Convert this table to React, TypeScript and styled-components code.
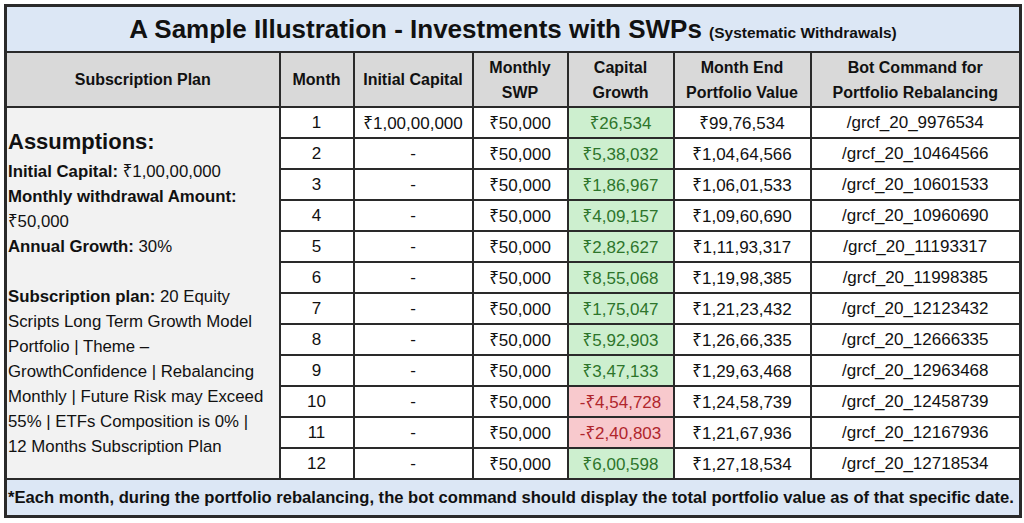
import React from "react";
import styled, { createGlobalStyle } from "styled-components";

// Types
type Row = {
  month: number;
  initial: string;
  swp: string;
  growth: string;
  end: string;
  command: string;
};

const GlobalStyle = createGlobalStyle`
  html, body {
    margin: 0;
    padding: 0;
    background: #ffffff;
  }
  body {
    font-family: "Liberation Sans", "Noto Sans", sans-serif;
    color: #111111;
  }
`;

const Page = styled.div`
  padding: 4px 4px 0 4px;
`;

const Table = styled.table`
  width: 1015px;
  border-collapse: collapse;
  table-layout: fixed;
  border: 3px solid #2a2a2a;
`;

const TitleCell = styled.td`
  height: 44px;
  background: #dce7f5;
  text-align: center;
  font-weight: 700;
  font-size: 26px;
  border: 2px solid #2a2a2a;
  padding: 0;
  white-space: nowrap;
`;

const TitleNote = styled.span`
  font-size: 15.5px;
`;

const HeadCell = styled.th`
  height: 53px;
  background: #d9d9d9;
  font-size: 16px;
  font-weight: 700;
  line-height: 25px;
  text-align: center;
  border: 2px solid #2a2a2a;
  padding: 0;
`;

const PlanCell = styled.td`
  background: #f2f2f2;
  border: 2px solid #2a2a2a;
  padding: 0 2px 0 1px;
  vertical-align: middle;
  font-size: 16.8px;
  line-height: 25px;
  white-space: nowrap;
`;

const PlanHeading = styled.div`
  font-size: 22px;
  font-weight: 700;
  line-height: 30px;
  margin-bottom: 2px;
`;

const Gap = styled.div`
  height: 25px;
`;

const Cell = styled.td<{ $tone?: "up" | "down" }>`
  height: 29px;
  padding: 0;
  text-align: center;
  font-size: 17px;
  border: 2px solid #2a2a2a;
  white-space: nowrap;
  background: ${({ $tone }) =>
    $tone === "up" ? "#cdefcf" : $tone === "down" ? "#f8c9cd" : "#ffffff"};
  color: ${({ $tone }) =>
    $tone === "up" ? "#2d752b" : $tone === "down" ? "#b0262c" : "#111111"};
`;

const FootCell = styled.td`
  height: 35px;
  background: #dce7f5;
  font-weight: 700;
  font-size: 16.6px;
  padding: 0 2px 0 1px;
  border: 2px solid #2a2a2a;
  white-space: nowrap;
`;

const rows: Row[] = [
  { month: 1, initial: "₹1,00,00,000", swp: "₹50,000", growth: "₹26,534", end: "₹99,76,534", command: "/grcf_20_9976534" },
  { month: 2, initial: "-", swp: "₹50,000", growth: "₹5,38,032", end: "₹1,04,64,566", command: "/grcf_20_10464566" },
  { month: 3, initial: "-", swp: "₹50,000", growth: "₹1,86,967", end: "₹1,06,01,533", command: "/grcf_20_10601533" },
  { month: 4, initial: "-", swp: "₹50,000", growth: "₹4,09,157", end: "₹1,09,60,690", command: "/grcf_20_10960690" },
  { month: 5, initial: "-", swp: "₹50,000", growth: "₹2,82,627", end: "₹1,11,93,317", command: "/grcf_20_11193317" },
  { month: 6, initial: "-", swp: "₹50,000", growth: "₹8,55,068", end: "₹1,19,98,385", command: "/grcf_20_11998385" },
  { month: 7, initial: "-", swp: "₹50,000", growth: "₹1,75,047", end: "₹1,21,23,432", command: "/grcf_20_12123432" },
  { month: 8, initial: "-", swp: "₹50,000", growth: "₹5,92,903", end: "₹1,26,66,335", command: "/grcf_20_12666335" },
  { month: 9, initial: "-", swp: "₹50,000", growth: "₹3,47,133", end: "₹1,29,63,468", command: "/grcf_20_12963468" },
  { month: 10, initial: "-", swp: "₹50,000", growth: "-₹4,54,728", end: "₹1,24,58,739", command: "/grcf_20_12458739" },
  { month: 11, initial: "-", swp: "₹50,000", growth: "-₹2,40,803", end: "₹1,21,67,936", command: "/grcf_20_12167936" },
  { month: 12, initial: "-", swp: "₹50,000", growth: "₹6,00,598", end: "₹1,27,18,534", command: "/grcf_20_12718534" },
];

const Assumptions = () => (
  <>
    <PlanHeading>Assumptions:</PlanHeading>
    <div><b>Initial Capital:</b> ₹1,00,00,000</div>
    <div><b>Monthly withdrawal Amount:</b></div>
    <div>₹50,000</div>
    <div><b>Annual Growth:</b> 30%</div>
    <Gap />
    <div><b>Subscription plan:</b> 20 Equity</div>
    <div>Scripts Long Term Growth Model</div>
    <div>Portfolio | Theme –</div>
    <div>GrowthConfidence | Rebalancing</div>
    <div>Monthly | Future Risk may Exceed</div>
    <div>55% | ETFs Composition is 0% |</div>
    <div>12 Months Subscription Plan</div>
  </>
);

const App = () => {
  return (
    <Page>
      <GlobalStyle />
      <Table>
        <colgroup>
          <col style={{ width: 274 }} />
          <col style={{ width: 74 }} />
          <col style={{ width: 119 }} />
          <col style={{ width: 95 }} />
          <col style={{ width: 106 }} />
          <col style={{ width: 137 }} />
          <col style={{ width: 210 }} />
        </colgroup>
        <tbody>
          <tr>
            <TitleCell colSpan={7}>
              A Sample Illustration - Investments with SWPs <TitleNote>(Systematic Withdrawals)</TitleNote>
            </TitleCell>
          </tr>
          <tr>
            <HeadCell>Subscription Plan</HeadCell>
            <HeadCell>Month</HeadCell>
            <HeadCell>Initial Capital</HeadCell>
            <HeadCell>Monthly<br />SWP</HeadCell>
            <HeadCell>Capital<br />Growth</HeadCell>
            <HeadCell>Month End<br />Portfolio Value</HeadCell>
            <HeadCell>Bot Command for<br />Portfolio Rebalancing</HeadCell>
          </tr>
          {rows.map((r, i) => (
            <tr key={r.month}>
              {i === 0 && (
                <PlanCell rowSpan={rows.length}>
                  <Assumptions />
                </PlanCell>
              )}
              <Cell>{r.month}</Cell>
              <Cell>{r.initial}</Cell>
              <Cell>{r.swp}</Cell>
              <Cell $tone={r.growth.startsWith("-") ? "down" : "up"}>{r.growth}</Cell>
              <Cell>{r.end}</Cell>
              <Cell>{r.command}</Cell>
            </tr>
          ))}
          <tr>
            <FootCell colSpan={7}>
              *Each month, during the portfolio rebalancing, the bot command should display the total portfolio value as of that specific date.
            </FootCell>
          </tr>
        </tbody>
      </Table>
    </Page>
  );
};

export default App;
